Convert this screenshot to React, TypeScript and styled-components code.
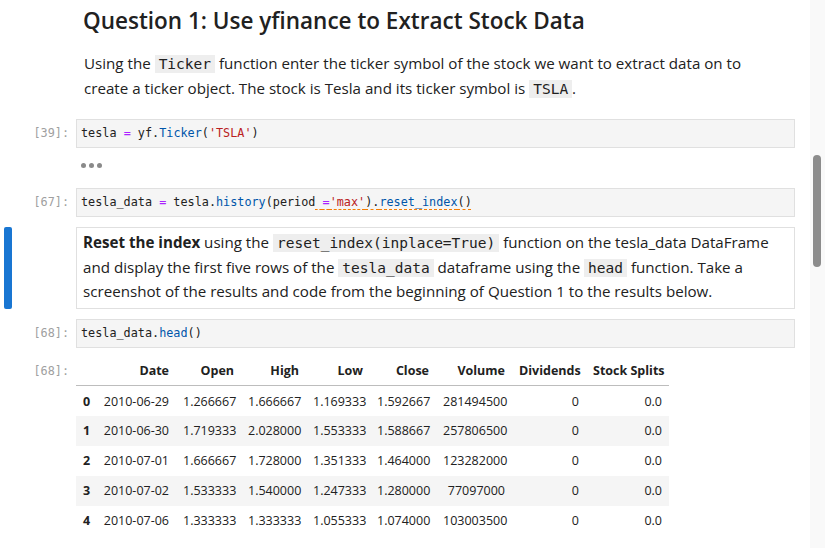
import React from "react";
import styled, { createGlobalStyle } from "styled-components";

const Global = createGlobalStyle`
  html, body { margin: 0; padding: 0; background: #ffffff; }
  body { font-family: "Open Sans", "Noto Sans", sans-serif; color: #212121; }
  * { box-sizing: border-box; }
`;

const Page = styled.div`
  display: flex;
  width: 825px;
  height: 548px;
  overflow: hidden;
`;

const Main = styled.div`
  flex: 1;
  display: flex;
  flex-direction: column;
  padding-right: 15px;
`;

const ScrollTrack = styled.div`
  width: 15px;
  background: #f9f9f9;
  padding: 155px 4px 0 3px;
`;

const ScrollThumb = styled.div`
  width: 8px;
  height: 112px;
  border-radius: 4px;
  background: #8c8c8c;
`;

const Row = styled.div<{ $mt?: number }>`
  display: flex;
  align-items: flex-start;
  margin-top: ${(p) => p.$mt ?? 0}px;
  position: relative;
`;

const Collapser = styled.div`
  position: absolute;
  left: 4px;
  top: 0;
  bottom: 0;
  width: 8px;
  border-radius: 2px;
  background: #1976d2;
`;

const Prompt = styled.div<{ $pt?: number }>`
  width: 76px;
  flex: none;
  padding-right: 7px;
  padding-top: ${(p) => p.$pt ?? 0}px;
  text-align: right;
  font-family: "DejaVu Sans Mono", monospace;
  font-size: 11.8px;
  color: #a0a0a0;
  line-height: 17px;
`;

const Body = styled.div`
  flex: 1;
  min-width: 0;
`;

const Markdown = styled.div<{ $boxed?: boolean }>`
  padding: ${(p) => (p.$boxed ? "3px 9px 4px 6px" : "0 10px 0 7px")};
  border: ${(p) => (p.$boxed ? "1px solid #e0e0e0" : "1px solid transparent")};
  font-size: 15.15px;
  line-height: 23.6px;
  color: #212121;
`;

const Heading = styled.h2`
  margin: 0;
  padding-top: 3px;
  font-size: 22.5px;
  font-weight: 600;
  line-height: 34px;
  color: #212121;
  margin-left: -1px;
`;

const Para = styled.p`
  margin: 14px 0 0 0;
`;

const InlineCode = styled.code`
  font-family: "DejaVu Sans Mono", monospace;
  font-size: 14.5px;
  background: #eeeeee;
  padding: 1px 4px;
`;

const CodeBox = styled.div`
  height: 29px;
  background: #f5f5f5;
  border: 1px solid #e0e0e0;
  padding: 5px 4px 0 4px;
  font-family: "DejaVu Sans Mono", monospace;
  font-size: 11.8px;
  line-height: 17px;
  white-space: pre;
  color: #212121;
`;

const Tok = styled.span<{ $k: "var" | "op" | "prop" | "str" }>`
  color: ${(p) =>
    p.$k === "op" ? "#aa22ff" : p.$k === "prop" ? "#0055aa" : p.$k === "str" ? "#ba2121" : "#212121"};
`;

const Lint = styled.span`
  text-decoration: underline dashed #f57c00;
  text-decoration-thickness: 1px;
  text-underline-offset: 3px;
`;

const Dots = styled.div`
  display: flex;
  gap: 3px;
  padding: 15px 0 0 5px;
  height: 40px;
`;

const Dot = styled.span`
  width: 5px;
  height: 5px;
  border-radius: 50%;
  background: #8a8a8a;
`;

const Table = styled.table`
  border-collapse: collapse;
  table-layout: fixed;
  width: 593px;
  font-size: 12.5px;
  color: #212121;
  margin-top: 7px;
`;

const Col = styled.col<{ $w: number }>`
  width: ${(p) => p.$w}px;
`;

const Th = styled.th`
  text-align: right;
  font-weight: 700;
  padding: 0 7px;
  height: 31px;
  vertical-align: middle;
  border-bottom: 1px solid #bdbdbd;
  white-space: nowrap;
`;

const Tr = styled.tr`
  &:nth-child(even) { background: #f5f5f5; }
`;

const Td = styled.td<{ $index?: boolean }>`
  text-align: ${(p) => (p.$index ? "left" : "right")};
  font-weight: ${(p) => (p.$index ? 700 : 400)};
  padding: 0 7px;
  height: 30px;
  white-space: nowrap;
`;

const widths = [20, 80, 65, 65, 64, 66, 76, 74, 83];
const headers = ["", "Date", "Open", "High", "Low", "Close", "Volume", "Dividends", "Stock Splits"];
const rows = [
  ["0", "2010-06-29", "1.266667", "1.666667", "1.169333", "1.592667", "281494500", "0", "0.0"],
  ["1", "2010-06-30", "1.719333", "2.028000", "1.553333", "1.588667", "257806500", "0", "0.0"],
  ["2", "2010-07-01", "1.666667", "1.728000", "1.351333", "1.464000", "123282000", "0", "0.0"],
  ["3", "2010-07-02", "1.533333", "1.540000", "1.247333", "1.280000", "77097000", "0", "0.0"],
  ["4", "2010-07-06", "1.333333", "1.333333", "1.055333", "1.074000", "103003500", "0", "0.0"],
];

export default function App() {
  return (
    <Page>
      <Global />
      <Main>
        <Row>
          <Prompt />
          <Body>
            <Markdown>
              <Heading>Question 1: Use yfinance to Extract Stock Data</Heading>
              <Para>
                Using the <InlineCode>Ticker</InlineCode> function enter the ticker symbol of the stock we want to
                extract data on to create a ticker object. The stock is Tesla and its ticker symbol is{" "}
                <InlineCode>TSLA</InlineCode>.
              </Para>
            </Markdown>
          </Body>
        </Row>

        <Row $mt={17}>
          <Prompt $pt={6}>[39]:</Prompt>
          <Body>
            <CodeBox>
              <Tok $k="var">tesla</Tok> <Tok $k="op">=</Tok> <Tok $k="var">yf</Tok>.<Tok $k="prop">Ticker</Tok>(
              <Tok $k="str">'TSLA'</Tok>)
            </CodeBox>
            <Dots>
              <Dot />
              <Dot />
              <Dot />
            </Dots>
          </Body>
        </Row>

        <Row $mt={0}>
          <Prompt $pt={6}>[67]:</Prompt>
          <Body>
            <CodeBox>
              <Tok $k="var">tesla_data</Tok> <Tok $k="op">=</Tok> <Tok $k="var">tesla</Tok>.
              <Tok $k="prop">history</Tok>(<Tok $k="var">period</Tok>
              <Lint>
                {" "}
                <Tok $k="op">=</Tok>
                <Tok $k="str">'max'</Tok>).<Tok $k="prop">reset_index</Tok>()
              </Lint>
            </CodeBox>
          </Body>
        </Row>

        <Row $mt={10}>
          <Collapser />
          <Prompt />
          <Body>
            <Markdown $boxed>
              <b>Reset the index</b> using the <InlineCode>reset_index(inplace=True)</InlineCode> function on the
              tesla_data DataFrame and display the first five rows of the <InlineCode>tesla_data</InlineCode> dataframe
              using the <InlineCode>head</InlineCode> function. Take a screenshot of the results and code from the
              beginning of Question 1 to the results below.
            </Markdown>
          </Body>
        </Row>

        <Row $mt={10}>
          <Prompt $pt={6}>[68]:</Prompt>
          <Body>
            <CodeBox>
              <Tok $k="var">tesla_data</Tok>.<Tok $k="prop">head</Tok>()
            </CodeBox>
          </Body>
        </Row>

        <Row>
          <Prompt $pt={15}>[68]:</Prompt>
          <Body>
            <Table>
              <colgroup>
                {widths.map((w, i) => (
                  <Col key={i} $w={w} />
                ))}
              </colgroup>
              <thead>
                <tr>
                  {headers.map((h, i) => (
                    <Th key={i}>{h}</Th>
                  ))}
                </tr>
              </thead>
              <tbody>
                {rows.map((r) => (
                  <Tr key={r[0]}>
                    {r.map((c, i) => (
                      <Td key={i} $index={i === 0}>
                        {c}
                      </Td>
                    ))}
                  </Tr>
                ))}
              </tbody>
            </Table>
          </Body>
        </Row>
      </Main>
      <ScrollTrack>
        <ScrollThumb />
      </ScrollTrack>
    </Page>
  );
}
